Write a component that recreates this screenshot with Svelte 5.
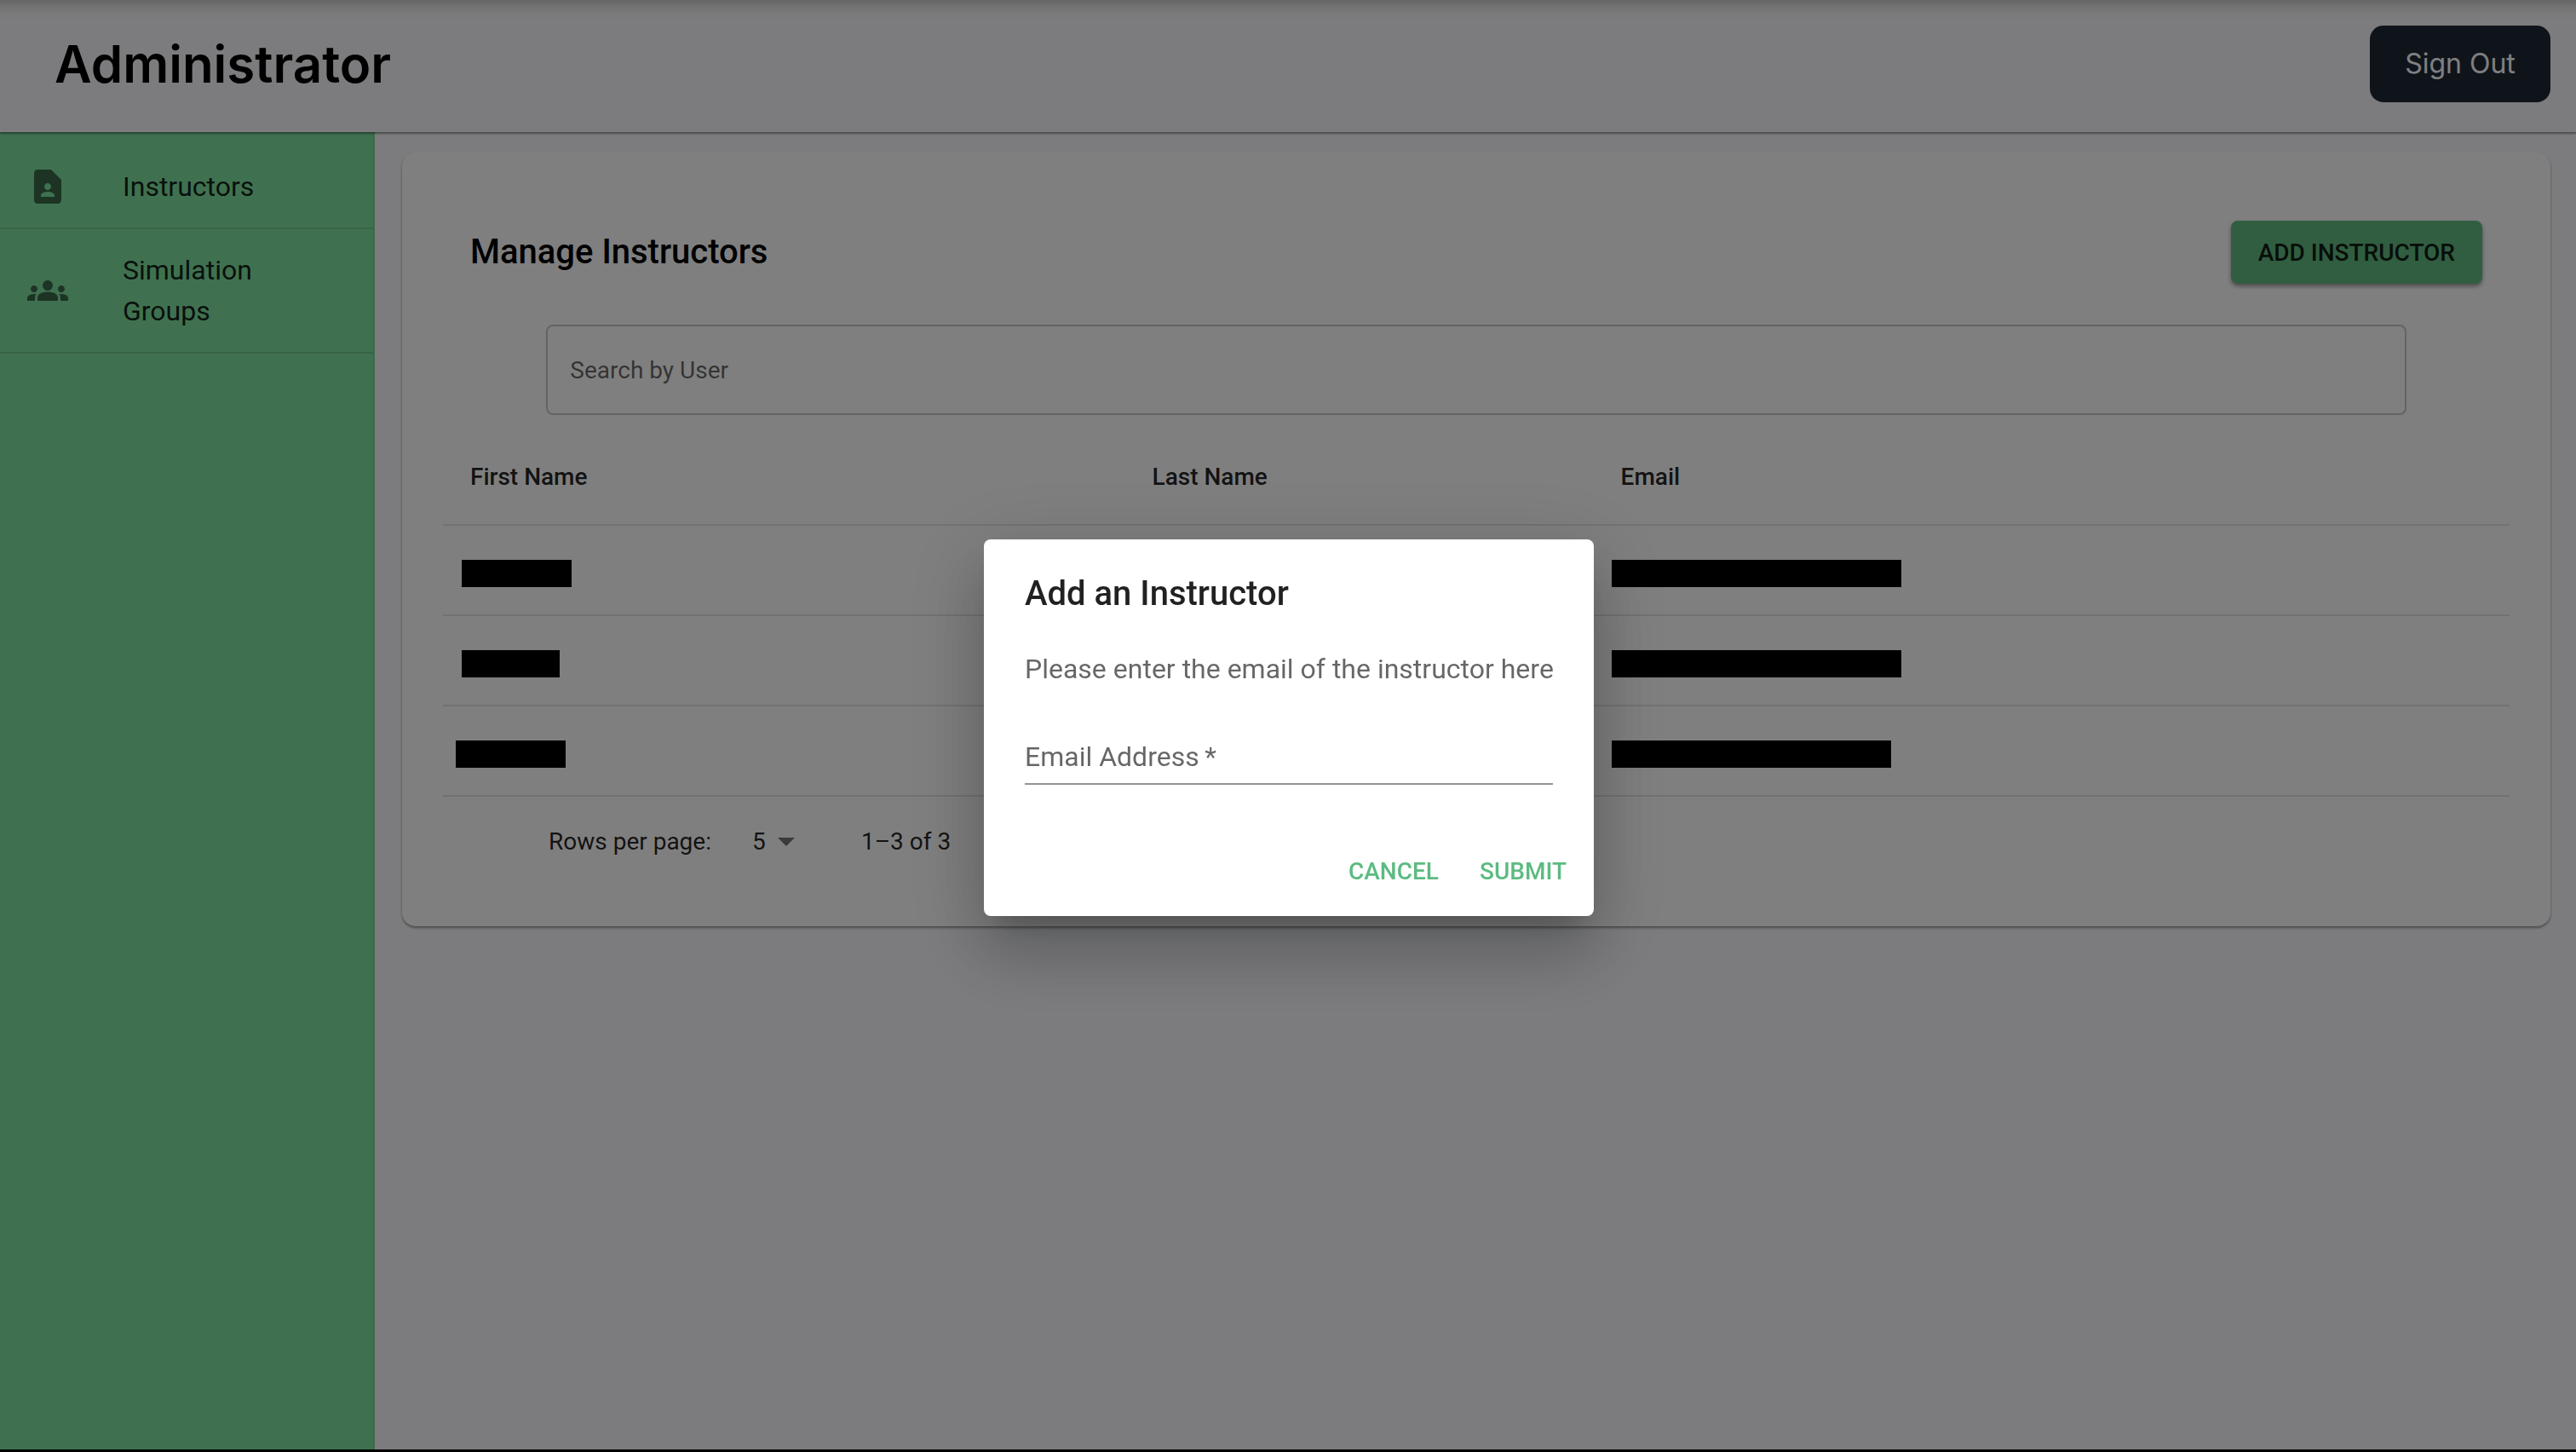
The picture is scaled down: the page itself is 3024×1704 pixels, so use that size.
<script>
  const instructors = [
    { name: { start: 22, width: 129 }, email: { start: 21, width: 340 } },
    { name: { start: 22, width: 115 }, email: { start: 21, width: 340 } },
    { name: { start: 15, width: 129 }, email: { start: 21, width: 328 } }
  ];
  let search = $state('');
  let email = $state('');
  let rows = $state('5');
</script>

{#snippet redacted(bar)}
  <span class="redacted" style="margin-left: {bar.start}px; width: {bar.width}px"></span>
{/snippet}

<div class="page">
  <header>
    <h1>Administrator</h1>
    <button class="sign-out">Sign Out</button>
  </header>

  <div class="body">
    <nav>
      <a href="#instructors">
        <svg viewBox="0 0 24 24" aria-hidden="true"><path d="M14 2H6c-1.1 0-1.99.9-1.99 2L4 20c0 1.1.89 2 1.99 2H18c1.1 0 2-.9 2-2V8l-6-6zm-2 8c1.1 0 2 .9 2 2s-.9 2-2 2-2-.9-2-2 .9-2 2-2zm4 8H8v-.57c0-.81.48-1.53 1.22-1.85.85-.37 1.79-.58 2.78-.58.99 0 1.93.21 2.78.58.74.32 1.22 1.04 1.22 1.85V18z" /></svg>
        <span>Instructors</span>
      </a>
      <a href="#groups">
        <svg viewBox="0 0 24 24" aria-hidden="true"><path d="M12 12.75c1.63 0 3.07.39 4.24.9 1.08.48 1.76 1.56 1.76 2.73V18H6v-1.61c0-1.18.68-2.26 1.76-2.73 1.17-.52 2.61-.91 4.24-.91zM4 13c1.1 0 2-.9 2-2s-.9-2-2-2-2 .9-2 2 .9 2 2 2zm1.13 1.1c-.37-.06-.74-.1-1.13-.1-.99 0-1.93.21-2.78.58C.48 14.9 0 15.62 0 16.43V18h4.5v-1.61c0-.83.23-1.61.63-2.29zM20 13c1.1 0 2-.9 2-2s-.9-2-2-2-2 .9-2 2 .9 2 2 2zm4 3.43c0-.81-.48-1.53-1.22-1.85-.85-.37-1.79-.58-2.78-.58-.39 0-.76.04-1.13.1.4.68.63 1.46.63 2.29V18H24v-1.57zM12 6c1.66 0 3 1.34 3 3s-1.34 3-3 3-3-1.34-3-3 1.34-3 3-3z" /></svg>
        <span>Simulation Groups</span>
      </a>
    </nav>

    <main>
      <section class="card">
        <div class="card-head">
          <h2>Manage Instructors</h2>
          <button class="add">ADD INSTRUCTOR</button>
        </div>
        <input class="search" type="text" placeholder="Search by User" aria-label="Search by User" bind:value={search} />
        <table>
          <thead>
            <tr>
              <th class="first">First Name</th>
              <th class="last">Last Name</th>
              <th>Email</th>
            </tr>
          </thead>
          <tbody>
            {#each instructors as row}
              <tr>
                <td>{@render redacted(row.name)}</td>
                <td></td>
                <td>{@render redacted(row.email)}</td>
              </tr>
            {/each}
          </tbody>
        </table>
        <div class="pagination">
          <label for="rows">Rows per page:</label>
          <div class="select">
            <select id="rows" bind:value={rows}>
              <option value="5">5</option>
            </select>
            <svg viewBox="0 0 24 24" aria-hidden="true"><path d="m7 10 5 5 5-5z" /></svg>
          </div>
          <span>1–3 of 3</span>
        </div>
      </section>
    </main>
  </div>
</div>

<div class="backdrop">
  <div class="dialog" role="dialog" aria-modal="true" aria-labelledby="dialog-title">
    <h2 id="dialog-title">Add an Instructor</h2>
    <p>Please enter the email of the instructor here</p>
    <input type="email" required placeholder="Email Address&thinsp;*" aria-label="Email Address" bind:value={email} />
    <div class="actions">
      <button>CANCEL</button>
      <button>SUBMIT</button>
    </div>
  </div>
</div>

<style>
  :global(body) {
    background: #000;
  }
  * {
    box-sizing: border-box;
  }
  h1, h2, p {
    margin: 0;
  }
  button, input, select {
    font-family: inherit;
    border: 0;
    margin: 0;
  }
  .page {
    min-height: 100vh;
    display: flex;
    flex-direction: column;
    border-bottom: 3px solid #000;
    background: #f8f9fd;
    font-family: Roboto, sans-serif;
    color: rgba(0, 0, 0, 0.87);
  }

  header {
    position: relative;
    display: flex;
    align-items: center;
    justify-content: space-between;
    padding: 30px 30px 35px 64px;
    background: linear-gradient(#cacaca, #e6e6e8 8px, #f4f4f7 16px, #f9f9fc 26px);
    box-shadow: 0 2px 2px rgba(0, 0, 0, 0.4);
  }
  h1 {
    font: 600 60px/72px Inter, sans-serif;
    color: #000;
  }
  .sign-out {
    min-width: 212px;
    height: 90px;
    padding: 0 40px;
    border-radius: 16px;
    background: #1f2937;
    color: #fff;
    font: 400 32px/48px Inter, sans-serif;
  }

  .body {
    flex: 1;
    display: flex;
  }
  nav {
    flex: none;
    width: 440px;
    padding-top: 16px;
    background: #7ee2a0;
    border-right: 2px solid #78d498;
  }
  nav a {
    display: flex;
    align-items: center;
    padding: 24px 64px 24px 32px;
    border-bottom: 2px solid #6fc78d;
    color: rgba(0, 0, 0, 0.87);
    font-size: 32px;
    line-height: 48px;
    text-decoration: none;
  }
  nav svg {
    flex: none;
    width: 48px;
    height: 48px;
    margin-right: 64px;
    fill: rgba(0, 0, 0, 0.54);
  }

  main {
    flex: 1;
    padding: 24px 30px 24px 32px;
  }
  .card {
    display: flex;
    flex-direction: column;
    padding: 48px;
    border-radius: 16px;
    background: #fff;
    box-shadow: 0 2px 3px rgba(0, 0, 0, 0.4);
  }
  .card-head {
    display: flex;
    align-items: center;
    justify-content: space-between;
    padding: 32px;
  }
  .card-head h2 {
    font-size: 40px;
    font-weight: 500;
    line-height: 64px;
    color: #000;
  }
  .add {
    height: 74px;
    padding: 0 32px;
    border-radius: 8px;
    background: #62ba80;
    box-shadow: 0 3px 5px rgba(0, 0, 0, 0.4);
    color: rgba(0, 0, 0, 0.87);
    font-size: 28px;
    font-weight: 500;
  }
  .search {
    align-self: center;
    width: 90%;
    height: 106px;
    margin: 16px 0;
    padding: 0 26px;
    border: 2px solid #c8c8c8;
    border-radius: 8px;
    background: none;
    font-size: 28px;
  }
  input::placeholder {
    color: rgba(0, 0, 0, 0.6);
    opacity: 1;
  }

  table {
    width: 100%;
    table-layout: fixed;
    border-spacing: 0;
  }
  th, td {
    padding: 0;
    border-bottom: 2px solid #e4e4e4;
  }
  th {
    height: 114px;
    padding: 0 32px;
    text-align: left;
    font-size: 28px;
    font-weight: 500;
  }
  .first {
    width: 33%;
  }
  .last {
    width: 550px;
  }
  td {
    height: 106px;
    padding-top: 8px;
  }
  .redacted {
    display: block;
    height: 32px;
    background: #000;
  }
  .pagination {
    display: flex;
    align-items: center;
    height: 104px;
    padding-left: 124px;
    font-size: 28px;
  }
  .select {
    display: flex;
    align-items: center;
    margin: 0 64px 0 48px;
  }
  select {
    appearance: none;
    padding: 0;
    background: none;
    color: inherit;
    font-size: 28px;
  }
  .select svg {
    width: 48px;
    height: 48px;
    fill: rgba(0, 0, 0, 0.54);
  }

  .backdrop {
    position: fixed;
    inset: 0;
    z-index: 1;
    display: flex;
    align-items: center;
    justify-content: center;
    padding: 4px 0 0 2px;
    background: rgba(0, 0, 0, 0.5);
    font-family: Roboto, sans-serif;
  }
  .dialog {
    display: flex;
    flex-direction: column;
    width: 716px;
    padding: 32px 48px 16px;
    border-radius: 8px;
    background: #fff;
    box-shadow:
      0 22px 30px -14px rgba(0, 0, 0, 0.2),
      0 48px 76px 6px rgba(0, 0, 0, 0.14),
      0 18px 92px 16px rgba(0, 0, 0, 0.12);
  }
  .dialog h2 {
    font-size: 40px;
    font-weight: 500;
    line-height: 64px;
    color: rgba(0, 0, 0, 0.87);
  }
  .dialog p {
    margin-top: 32px;
    font-size: 32px;
    line-height: 48px;
    color: rgba(0, 0, 0, 0.6);
    white-space: nowrap;
  }
  .dialog input {
    height: 64px;
    margin-top: 48px;
    padding: 0;
    border-bottom: 2px solid #949494;
    background: none;
    font-size: 32px;
  }
  .actions {
    display: flex;
    justify-content: flex-end;
    gap: 16px;
    margin: 64px -32px 0 0;
  }
  .actions button {
    height: 74px;
    padding: 0 16px;
    background: none;
    color: #5cbb80;
    font-size: 28px;
    font-weight: 500;
  }
</style>
